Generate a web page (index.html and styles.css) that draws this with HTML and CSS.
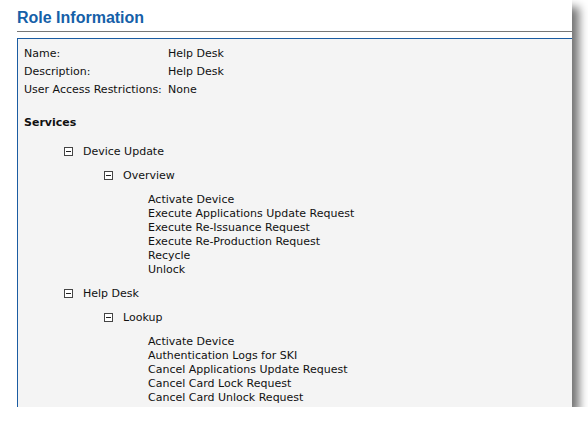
FILE: index.html
```html
<!DOCTYPE html>
<html lang="en">
<head>
    <meta charset="UTF-8">
    <title>Role Information</title>
    <link rel="stylesheet" href="styles.css">
</head>
<body>
    <div class="frame">
        <div class="page">
            <h1 class="page-title">Role Information</h1>
            <div class="info-box">
                <div class="info-row"><span class="label">Name:</span><span>Help Desk</span></div>
                <div class="info-row"><span class="label">Description:</span><span>Help Desk</span></div>
                <div class="info-row"><span class="label">User Access Restrictions:</span><span>None</span></div>

                <div class="services-title">Services</div>

                <div class="tree">
                    <div class="node level-1"><span class="toggle"></span>Device Update</div>
                    <div class="node level-2"><span class="toggle"></span>Overview</div>
                    <ul class="items">
                        <li>Activate Device</li>
                        <li>Execute Applications Update Request</li>
                        <li>Execute Re-Issuance Request</li>
                        <li>Execute Re-Production Request</li>
                        <li>Recycle</li>
                        <li>Unlock</li>
                    </ul>
                    <div class="node level-1"><span class="toggle"></span>Help Desk</div>
                    <div class="node level-2"><span class="toggle"></span>Lookup</div>
                    <ul class="items">
                        <li>Activate Device</li>
                        <li>Authentication Logs for SKI</li>
                        <li>Cancel Applications Update Request</li>
                        <li>Cancel Card Lock Request</li>
                        <li>Cancel Card Unlock Request</li>
                        <li>Cancel Device Lock Request</li>
                    </ul>
                </div>
            </div>
        </div>
    </div>
</body>
</html>
```

FILE: styles.css
```css
* {
    margin: 0;
    padding: 0;
    box-sizing: border-box;
}
body {
    background: white;
    font-family: Tahoma, "DejaVu Sans", sans-serif;
}
.frame {
    width: 572px;
    height: 407px;
    overflow: hidden;
    background: white;
    box-shadow: 7px 7px 9px rgba(0, 0, 0, 0.55);
}
.page {
    padding-left: 17px;
}
.page-title {
    font-family: "Liberation Sans", Arial, sans-serif;
    font-size: 16px;
    font-weight: bold;
    color: #1560a8;
    line-height: 19px;
    padding-top: 8px;
    padding-bottom: 4px;
    border-bottom: 1px solid #777;
}
.info-box {
    margin-top: 6px;
    margin-right: -10px;
    border: 1px solid #1b5ca2;
    background: #f4f4f4;
    padding: 6px 6px 0 6px;
    height: 500px;
    font-size: 11px;
    color: #111;
}
.info-row {
    display: flex;
    line-height: 18px;
}
.label {
    width: 144px;
}
.services-title {
    font-weight: bold;
    margin-top: 15px;
    line-height: 18px;
}
.tree {
    margin-top: 7px;
}
.node {
    display: flex;
    align-items: center;
    height: 24px;
}
.level-1 {
    padding-left: 40px;
}
.level-2 {
    padding-left: 80px;
}
.toggle {
    position: relative;
    width: 9px;
    height: 9px;
    border: 1px solid #444;
    margin-right: 10px;
    background: white;
}
.toggle::after {
    content: "";
    position: absolute;
    left: 1px;
    right: 1px;
    top: 3px;
    height: 1px;
    background: #222;
}
.items {
    list-style: none;
    padding: 6px 0 4px 124px;
    line-height: 14px;
}
```
